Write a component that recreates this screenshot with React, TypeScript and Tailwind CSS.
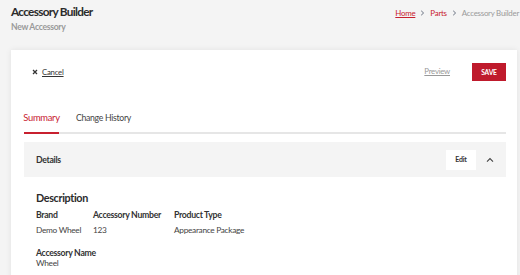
import React from "react";

function Chevron() {
  return (
    <svg width="5" height="6" viewBox="0 0 5 6" className="text-gray-500">
      <path d="M1.2 0.8 L3.6 3 L1.2 5.2" fill="none" stroke="currentColor" strokeWidth="1" />
    </svg>
  );
}

export default function App() {
  return (
    <div
      className="w-[520px] h-[275px] overflow-hidden bg-[#f4f4f4] text-[#333]"
      style={{ fontFamily: "Lato, 'Liberation Sans', sans-serif" }}
    >
      <div className="flex justify-between pl-[11px] pr-[1px] h-[50px]">
        <div className="pt-[4px]">
          <div className="text-[11.8px] font-bold leading-[15px] tracking-[-0.7px] text-[#2b2b2b]">Accessory Builder</div>
          <div className="text-[8.6px] font-bold tracking-[-0.3px] text-[#9a9a9a] mt-[3px] leading-[10px]">New Accessory</div>
        </div>
        <div className="flex items-center gap-[5px] h-[10px] mt-[7.5px] text-[7.9px] tracking-[-0.25px] leading-[10px]">
          <span className="text-[#c8202f] underline">Home</span>
          <Chevron />
          <span className="text-[#c8202f]">Parts</span>
          <Chevron />
          <span className="text-[#9a9a9a]">Accessory Builder</span>
        </div>
      </div>
      <div className="ml-[11px] w-[506px] h-[240px] bg-white shadow-[0_0_6px_rgba(0,0,0,0.08)] pl-[13px] pr-[11px]">
        <div className="flex items-center justify-between pt-[13px] pl-[8px] h-[31px]">
          <div className="flex items-center gap-[4px] text-[7.8px] tracking-[-0.25px] leading-[10px]">
            <svg width="6" height="6" viewBox="0 0 6 6">
              <path d="M1 1 L5 5 M5 1 L1 5" stroke="#333" strokeWidth="1.3" />
            </svg>
            <span className="underline text-[#333]">Cancel</span>
          </div>
          <div className="flex items-center gap-[22px]">
            <span className="underline text-[7.8px] tracking-[-0.25px] text-[#999]">Preview</span>
            <button className="bg-[#bf1a2c] text-white text-[6.7px] tracking-[-0.2px] font-bold w-[34px] h-[18px] flex items-center justify-center">SAVE</button>
          </div>
        </div>
        <div className="mt-[31px] flex border-b-2 border-[#e6e6e6] leading-[12px]">
          <div className="text-[9.4px] tracking-[-0.3px] text-[#c8202f] border-b-2 border-[#c8202f] -mb-[2px] pb-[8px] w-[35px] flex justify-center">
            Summary
          </div>
          <div className="ml-[17px] text-[8.7px] tracking-[-0.3px] text-[#444] pb-[8px]">Change History</div>
        </div>
        <div className="mt-[8px] bg-[#f4f4f4] h-[35px] flex items-center justify-between pl-[12px] pr-[12px]">
          <span className="text-[8.7px] tracking-[-0.3px] font-bold text-[#333]">Details</span>
          <div className="flex items-center gap-[10px]">
            <div className="bg-white w-[30px] h-[20px] flex items-center justify-center text-[7px] tracking-[-0.2px] font-bold text-[#333]">Edit</div>
            <svg width="8" height="6" viewBox="0 0 8 6">
              <path d="M1 4.6 L4 1.6 L7 4.6" fill="none" stroke="#444" strokeWidth="1.1" />
            </svg>
          </div>
        </div>
        <div className="pl-[12px] pt-[15px]">
          <div className="text-[10.8px] tracking-[-0.35px] font-bold text-[#2b2b2b] leading-[12px]">Description</div>
          <div className="flex mt-[5px] leading-[11px]">
            <div className="w-[57px]">
              <div className="font-bold text-[8.7px] tracking-[-0.3px]">Brand</div>
              <div className="mt-[4.5px] text-[8.3px] tracking-[-0.3px] text-[#444]">Demo Wheel</div>
            </div>
            <div className="w-[81px]">
              <div className="font-bold text-[8.7px] tracking-[-0.3px]">Accessory Number</div>
              <div className="mt-[4.5px] text-[8.3px] tracking-[-0.3px] text-[#444]">123</div>
            </div>
            <div>
              <div className="font-bold text-[8.7px] tracking-[-0.3px]">Product Type</div>
              <div className="mt-[4.5px] text-[8.3px] tracking-[-0.3px] text-[#444]">Appearance Package</div>
            </div>
          </div>
          <div className="mt-[11.5px] leading-[11px]">
            <div className="font-bold text-[8.7px] tracking-[-0.3px]">Accessory Name</div>
            <div className="text-[8.3px] tracking-[-0.3px] text-[#444]">Wheel</div>
          </div>
        </div>
      </div>
    </div>
  );
}
